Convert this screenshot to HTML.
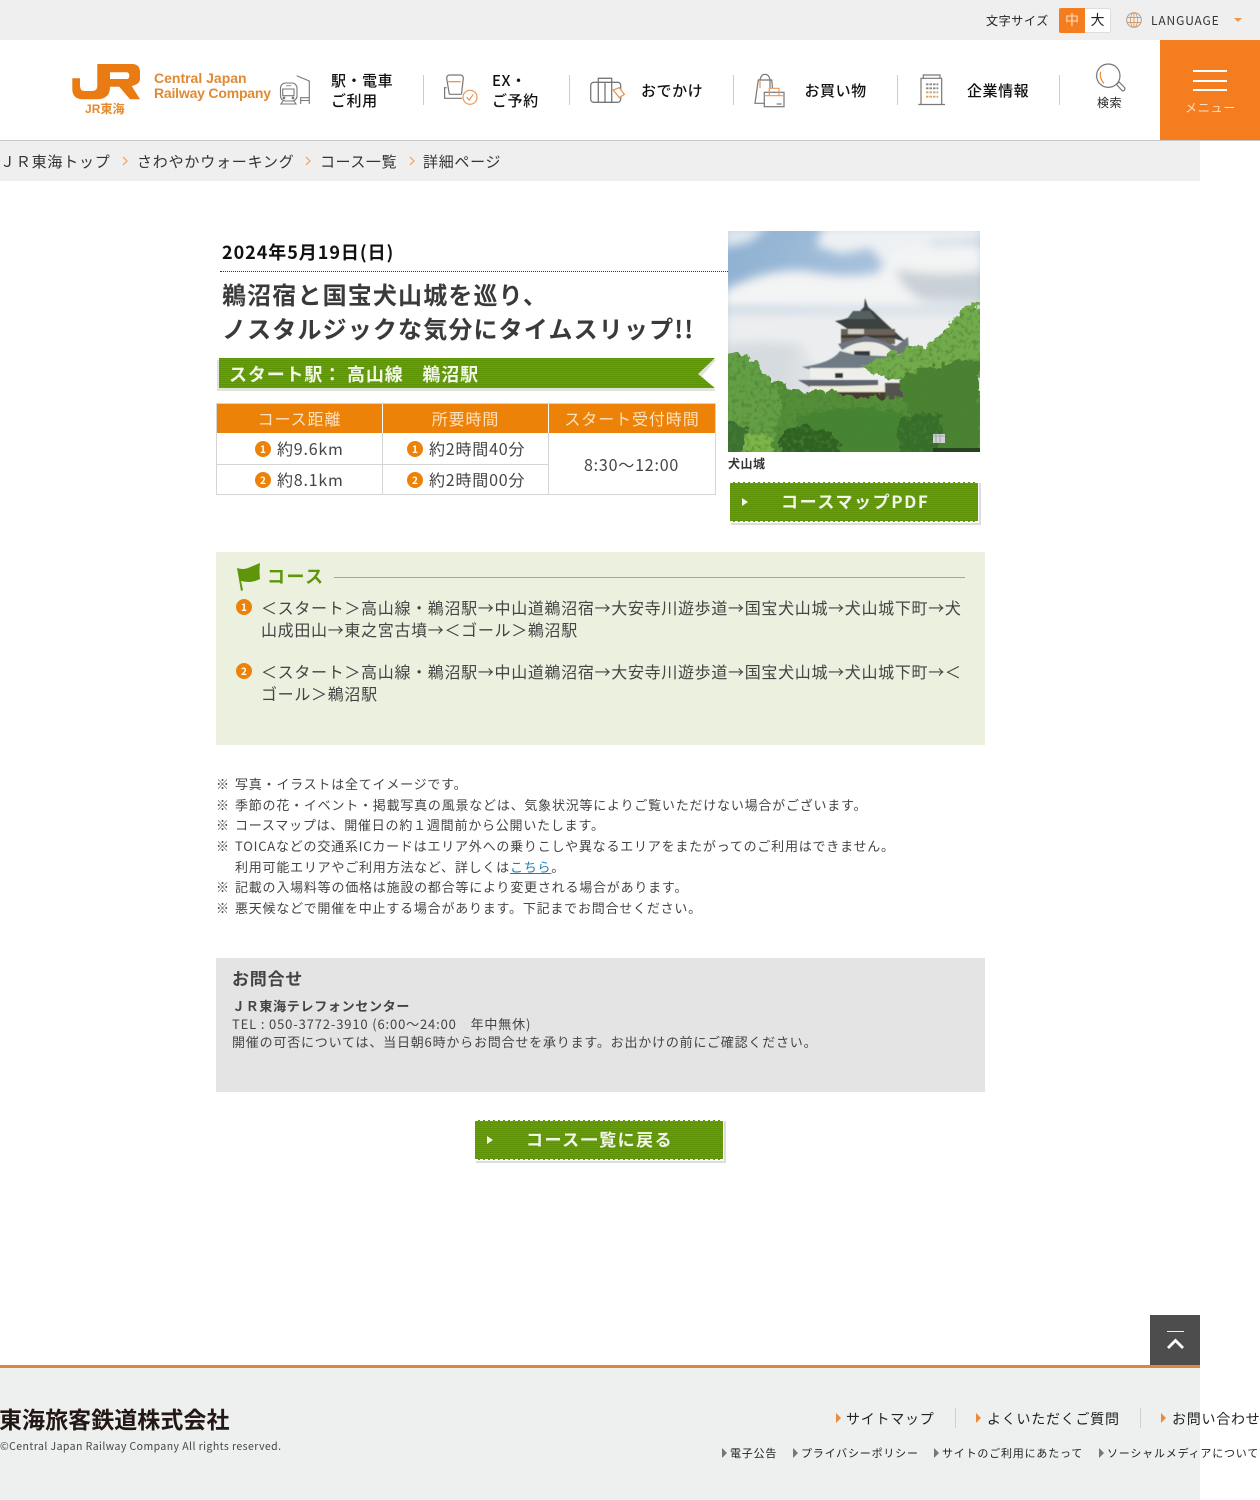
<!DOCTYPE html>
<html lang="ja"><head><meta charset="utf-8"><title>さわやかウォーキング</title>
<style>
*{box-sizing:border-box}
html,body{margin:0;padding:0}
body{width:1260px;height:1500px;position:relative;overflow:hidden;background:#fff;font-family:"Noto Sans CJK JP","Liberation Sans",sans-serif;color:#333}
.a{position:absolute;white-space:nowrap}
.t{position:absolute;white-space:nowrap;line-height:20px;height:20px}
svg{position:absolute;display:block;overflow:visible}
.nav{font-size:15px;font-weight:500;color:#111;letter-spacing:.55px;line-height:20px}
.sep{position:absolute;top:75px;width:1px;height:30px;background:#ccc}
.green{background:repeating-linear-gradient(180deg,#6a9e0c 0,#6a9e0c 1px,#5d9206 1px,#5d9206 2px)}
.num{position:absolute;border-radius:50%;width:16px;height:16px;background:#ec8208;color:#fff;font-size:10px;font-weight:700;line-height:16px;text-align:center}
.note{left:216px;font-size:13px;letter-spacing:.78px;color:#444}
.note b{font-weight:400;display:inline-block;width:19px;letter-spacing:0}
.th{position:absolute;top:404px;height:29px;background:#ec8208;font-size:16px;text-align:center;line-height:28px;letter-spacing:.9px;color:#fde2c0}
.td{position:absolute;font-size:16px;color:#444;letter-spacing:.8px;line-height:20px;white-space:nowrap}
.btn{position:absolute;border-top:1px dashed #fff;border-bottom:1px dashed #fff}
.fl{position:absolute;top:1409px;font-size:14px;letter-spacing:.75px;color:#222;line-height:20px;white-space:nowrap}
.fs{position:absolute;top:1445px;font-size:11px;letter-spacing:.8px;color:#222;line-height:16px;white-space:nowrap}
.tri{position:absolute;width:0;height:0;border-style:solid;border-color:transparent}
</style></head><body>

<!-- top bar -->
<div class="a" style="left:0;top:0;width:1260px;height:40px;background:#efefef"></div>
<div class="t" style="left:986px;top:11px;font-size:12px;letter-spacing:.65px;color:#222">文字サイズ</div>
<div class="a" style="left:1059px;top:8px;width:52px;height:25px;background:#fff;border:1px solid #ddd;border-radius:2px"></div>
<div class="a" style="left:1059px;top:8px;width:26px;height:25px;background:#f47d20;border-radius:2px 0 0 2px;color:#fde0c0;font-size:14px;line-height:25px;text-align:center">中</div>
<div class="a" style="left:1085px;top:8px;width:25px;height:25px;color:#222;font-size:14px;line-height:25px;text-align:center">大</div>
<svg style="left:1126px;top:12px" width="16" height="16" viewBox="0 0 16 16" fill="none" stroke="#d99a66" stroke-width=".9"><circle cx="8" cy="8" r="7.3" stroke="#999"/><ellipse cx="8" cy="8" rx="3.6" ry="7.3"/><path d="M8 .7v14.6M1 5.5h14M1 10.5h14"/></svg>
<div class="t" style="left:1151px;top:11px;font-size:12px;letter-spacing:.85px;color:#333">LANGUAGE</div>
<div class="tri" style="left:1234px;top:18px;border-width:4px 4px 0;border-top-color:#f0954a"></div>

<!-- header -->
<div class="a" style="left:0;top:40px;width:1260px;height:101px;background:#fff;border-bottom:1px solid #c8c8c8"></div>
<svg style="left:71px;top:64px" width="70" height="36" viewBox="0 0 70 36"><path fill="#ea7a12" fill-rule="evenodd" d="M26.300 0H60.700Q69 0 69 8V15Q69 20 60.700 22L69 35.300H59L48.300 22.700H39V23Q39 35.300 25.700 35.300H12.300Q1.300 35.300 1.300 25V14.300H9V22Q9 27 14 27H20.700Q26.300 27 26.300 22ZM39 8.300V15H55.700Q58.300 15 58.300 11.700T55.700 8.300Z"/></svg>
<div class="t" style="left:85px;top:99px;font-size:12px;font-weight:700;color:#e5892d;letter-spacing:.1px;font-family:'Liberation Sans','Noto Sans CJK JP',sans-serif">JR東海</div>
<div class="t" style="left:154px;top:68px;font-size:14px;font-weight:700;color:#e08a33;letter-spacing:0;font-family:'Liberation Sans',sans-serif">Central Japan</div>
<div class="t" style="left:154px;top:83px;font-size:14px;font-weight:700;color:#e08a33;letter-spacing:-.2px;font-family:'Liberation Sans',sans-serif">Railway Company</div>

<svg style="left:279px;top:75px" width="32" height="32" viewBox="0 0 32 32" fill="none" stroke="#777" stroke-width="1.100"><path d="M17.700 .7L30.300 6V29M21.700 29V22.700H30.300M21.700 25.500H30.300"/><rect x="1.500" y="8" width="16.500" height="18" rx="5"/><path d="M3.700 14H15V20.700H3.700z"/><path d="M7 10.700H12.300" stroke="#ee8a33"/><path d="M4 26L2 29H17L15 26"/><circle cx="5" cy="23" r=".8" fill="#777"/><circle cx="14" cy="23" r=".8" fill="#777"/></svg>
<div class="a nav" style="left:331px;top:71px;">駅・電車<br>ご利用</div>
<div class="sep" style="left:423px"></div>
<svg style="left:444px;top:74px" width="34" height="32" viewBox="0 0 34 32" fill="none" stroke="#777" stroke-width="1.200"><path d="M5.300 20.300L2.700 4.300Q2.700 1 6 1H16Q19.300 1 19.300 4.300L17.500 20.300M5.300 20.300H17.500M2.700 13.700H.6V24.300H18"/><path d="M4.300 7.700H16.700" stroke="#ee8a33"/><circle cx="26" cy="23.300" r="7" stroke="#e9975a"/><path d="M22.700 23.300L25.300 26L29.300 20.300" stroke="#e9975a"/></svg>
<div class="a nav" style="left:492px;top:71px;">EX・<br>ご予約</div>
<div class="sep" style="left:569px"></div>
<svg style="left:590px;top:76px" width="35" height="28" viewBox="0 0 35 28" fill="none" stroke="#777" stroke-width="1.300"><rect x=".7" y="6.300" width="30" height="20" rx="3"/><path d="M8.300 6.300V2.300H21.700V6.300M8.300 6.300V26.300M15 6.300V26.300M21.700 6.300V26.300"/><path d="M23.300 14L29.300 11.700L34.300 18.300L29.300 21.700z" stroke="#e9975a" fill="#fff"/></svg>
<div class="a nav" style="left:641px;top:81px">おでかけ</div>
<div class="sep" style="left:733px"></div>
<svg style="left:754px;top:74px" width="32" height="34" viewBox="0 0 32 34" fill="none" stroke="#777" stroke-width="1.200"><path d="M10.300 29.300H1L4.300 6H17.700L18.500 14"/><path d="M6 6Q7 .3 11 .3T16 6V14"/><path d="M6 6V14" stroke="#e9975a"/><rect x="10.300" y="18.300" width="19.700" height="14.400"/><path d="M15.300 21.700V14.300H25V21.700M10.300 21.700H30" stroke="#e9975a"/><path d="M22.700 30H27.700"/></svg>
<div class="a nav" style="left:804.500px;top:81px">お買い物</div>
<div class="sep" style="left:897px"></div>
<svg style="left:918px;top:74px" width="28" height="32" viewBox="0 0 28 32" fill="none" stroke="#777" stroke-width="1.200"><path d="M3 30.300V4.300H23.700V30.300M5.300 4.300V1H22V4.300M.3 30.500H27"/><path d="M8 10.300H20.300M8 14.300H20.300" stroke="#888" stroke-width="1.800" stroke-dasharray="2.500 1"/><path d="M8 18.300H20.300M8 22.700H20.300" stroke="#d5a466" stroke-width="1.800" stroke-dasharray="2.500 1"/></svg>
<div class="a nav" style="left:967px;top:81px">企業情報</div>
<div class="sep" style="left:1059px"></div>
<svg style="left:1096px;top:63px" width="30" height="30" viewBox="0 0 30 30" fill="none" stroke="#777" stroke-width="1.200"><circle cx="12.300" cy="12.700" r="11.700"/><path d="M4.700 8.700Q3 15 8 20.300" stroke="#ee8a33"/><path d="M20.500 21.500L23 19L28.500 24.500Q29.500 26.500 28 27.500T25.500 27z"/></svg>
<div class="t" style="left:1097px;top:93px;font-size:12px;letter-spacing:.5px;color:#222">検索</div>
<div class="a" style="left:1160px;top:40px;width:100px;height:100px;background:#f47d20"></div>
<div class="a" style="left:1193px;top:70px;width:34px;height:2px;background:#fff"></div>
<div class="a" style="left:1193px;top:80px;width:34px;height:2px;background:#fff"></div>
<div class="a" style="left:1193px;top:89px;width:34px;height:2px;background:#fff"></div>
<div class="t" style="left:1185px;top:98px;font-size:12px;color:#fde0c0;letter-spacing:.8px">メニュー</div>

<!-- breadcrumb -->
<div class="a" style="left:0;top:141px;width:1200px;height:40px;background:#efefef"></div>
<div class="t" style="left:0;top:152px;font-size:15px;letter-spacing:.8px;color:#333">ＪＲ東海トップ</div>
<div class="t" style="left:137px;top:152px;font-size:15px;letter-spacing:.8px;color:#333">さわやかウォーキング</div>
<div class="t" style="left:320px;top:152px;font-size:15px;letter-spacing:.55px;color:#333">コース一覧</div>
<div class="t" style="left:423px;top:152px;font-size:15px;letter-spacing:.7px;color:#333">詳細ページ</div>
<svg style="left:122px;top:156px" width="6" height="10" fill="none" stroke="#f0a060" stroke-width="1.200"><path d="M1 1l4 4-4 4"/></svg>
<svg style="left:305px;top:156px" width="6" height="10" fill="none" stroke="#f0a060" stroke-width="1.200"><path d="M1 1l4 4-4 4"/></svg>
<svg style="left:409px;top:156px" width="6" height="10" fill="none" stroke="#f0a060" stroke-width="1.200"><path d="M1 1l4 4-4 4"/></svg>

<!-- heading -->
<div class="a" style="left:222px;top:240px;font-size:18px;font-weight:700;letter-spacing:.95px;line-height:24px;color:#111">2024年5月19日(日)</div>
<div class="a" style="left:220px;top:271px;width:508px;border-top:1px dotted #333"></div>
<div class="a" style="left:222px;top:277px;font-size:24px;font-weight:700;letter-spacing:1.150px;line-height:34px;color:#3a3a3a">鵜沼宿と国宝犬山城を巡り、<br>ノスタルジックな気分にタイムスリップ!!</div>

<!-- ribbon -->
<svg style="left:217px;top:357px" width="500" height="34" viewBox="0 0 500 34"><defs><pattern id="st" width="4" height="2" patternUnits="userSpaceOnUse"><rect width="4" height="1" fill="#6da011"/><rect y="1" width="4" height="1" fill="#5c9304"/></pattern></defs><path d="M0 3h499l-14 16 14 15H0z" fill="#dfe3d8"/><path d="M2 1h496l-17 16 17 14H2z" fill="url(#st)"/></svg>
<div class="t" style="left:229px;top:364px;font-size:18px;font-weight:700;color:#f2f7e8;letter-spacing:.85px">スタート駅： 高山線　鵜沼駅</div>

<!-- table -->
<div class="a" style="left:216px;top:403px;width:500px;height:92px;border:1px solid #d5d5d5;background:#fff"></div>
<div class="th" style="left:217px;width:165px">コース距離</div>
<div class="th" style="left:383px;width:165px">所要時間</div>
<div class="th" style="left:549px;width:166px">スタート受付時間</div>
<div class="a" style="left:382px;top:433px;width:1px;height:61px;background:#d5d5d5"></div>
<div class="a" style="left:548px;top:433px;width:1px;height:61px;background:#d5d5d5"></div>
<div class="a" style="left:217px;top:464px;width:331px;height:1px;background:#d5d5d5"></div>
<div class="num" style="left:255px;top:441px;">1</div><div class="td" style="left:277px;top:438px">約9.6km</div>
<div class="num" style="left:255px;top:472px;">2</div><div class="td" style="left:277px;top:469px">約8.1km</div>
<div class="num" style="left:407px;top:441px;">1</div><div class="td" style="left:429px;top:438px">約2時間40分</div>
<div class="num" style="left:407px;top:472px;">2</div><div class="td" style="left:429px;top:469px">約2時間00分</div>
<div class="td" style="left:584px;top:454px">8:30～12:00</div>

<!-- photo -->
<svg style="left:728px;top:231px;overflow:hidden" width="252" height="221" viewBox="0 0 252 221">
<defs>
<linearGradient id="sky" x1="0" y1="0" x2="1" y2=".4"><stop offset="0" stop-color="#8eb0d2"/><stop offset=".6" stop-color="#a9c3dd"/><stop offset="1" stop-color="#a8bdd2"/></linearGradient>
<filter id="b1" x="-20%" y="-20%" width="140%" height="140%"><feGaussianBlur stdDeviation="5"/></filter>
<filter id="leaf" x="-10%" y="-10%" width="120%" height="120%">
<feTurbulence type="fractalNoise" baseFrequency=".12" numOctaves="3" seed="4" result="n"/>
<feDisplacementMap in="SourceGraphic" in2="n" scale="14" xChannelSelector="R" yChannelSelector="G" result="d"/>
<feTurbulence type="fractalNoise" baseFrequency=".22" numOctaves="2" seed="9"/>
<feColorMatrix values="0 0 0 0 .08  0 0 0 0 .2  0 0 0 0 .04  2.400 0 0 0 -1.150" result="sh"/>
<feComposite in="sh" in2="d" operator="in" result="shd"/>
<feMerge><feMergeNode in="d"/><feMergeNode in="shd"/></feMerge>
</filter>
<filter id="b3"><feGaussianBlur stdDeviation=".45"/></filter>
</defs>
<rect width="252" height="221" fill="url(#sky)"/>
<g filter="url(#b1)">
<path d="M-5 -5h45l-18 16-27 6z" fill="#dfe8ef"/>
<path d="M95 -5h160v14l-50 2-30 18-22 2-10-14-30 6-25-8z" fill="#eef1f3"/>
<path d="M170 20q40-10 85-6v10l-30 6z" fill="#f5f6f7"/>
<path d="M-5 60q45-24 85-20 35 8 70 2 8-18 30-24 40-8 75 4v55H-5z" fill="#f3f4f4"/>
<path d="M-5 80h260v90H-5z" fill="#ebedee"/>
<path d="M168 38q40 8 87 2v32l-60-2q-24-14-27-32z" fill="#c9d1d8"/>
<path d="M-5 115q40-8 80 0l-5 60H-5z" fill="#d6dbdf"/>
<path d="M65 115q30 20 40 60H60z" fill="#dde1e4"/>
</g>
<!-- castle -->
<g filter="url(#b3)">
<path d="M137 67l3 9 6 5h-15l5-5z" fill="#3c4444"/>
<path d="M107 90q16-2 24-10h14q10 10 33 31-16-5-28-7h-22q-12-9-21-14z" fill="#3a4240"/>
<path d="M125 80h17l6 8h-29z" fill="#566060"/>
<rect x="113" y="98" width="54" height="15" fill="#6a6258"/>
<rect x="113" y="104" width="54" height="3" fill="#3a3a36"/>
<rect x="120" y="98" width="16" height="5" fill="#d0ccc4"/>
<path d="M110 113q16-4 28-8 14 4 30 10l12-9 1 16-12 2H118z" fill="#6e7680"/>
<path d="M113 120q14-10 28-9 14 0 24 10l-6 3h-40z" fill="#eceae4"/>
<rect x="126" y="120" width="16" height="7" fill="#33373a"/>
<path d="M74 136q30-4 38-16l16 4 52 2-4 8-62 4H80z" fill="#6f7a84"/>
<rect x="82" y="137" width="70" height="11" fill="#eeefeb"/>
<rect x="107" y="142" width="8" height="5" fill="#333"/>
<path d="M70 149h80v5l-68 2z" fill="#5f656c"/>
<rect x="82" y="155" width="76" height="6" fill="#ecead8"/>
<rect x="104" y="161" width="54" height="14" fill="#4a3a30"/>
<rect x="157" y="152" width="19" height="20" fill="#55534e"/>
<rect x="108" y="172" width="45" height="6" fill="#8a7055"/>
</g>
<!-- trees -->
<g filter="url(#leaf)">
<path d="M-12 127q14-8 28-3 14 8 24 22 16 8 30 14 14 4 25-2 18 6 40 8l70 2 50-5v70H-12z" fill="#528f38"/>
<path d="M-12 127q14-8 28-3 14 8 24 22 14 10 14 30l-10 30-56 10z" fill="#649f44"/>
<path d="M132 136q22-8 38-16 16-10 28-3 8-12 24-22 6-16 22-21l14 2v70l-30 12-40-8-30-4z" fill="#72ab4c"/>
<path d="M170 150q30-20 82-22v100h-62q-6-40-20-78z" fill="#4a8331"/>
<path d="M70 185q40-12 90-6 30 2 40 50H60z" fill="#458531"/>
<path d="M55 200q20-8 50 2l10 25H50z" fill="#2d6224"/>
<path d="M10 210q15-10 32-5l5 25H10z" fill="#7db447"/>
<path d="M170 190q20-10 45-6l-5 45h-40z" fill="#356e29"/>
<path d="M-12 190q20-2 30 8l-5 28h-25z" fill="#3b7230"/>
</g>
<rect x="205" y="203" width="12" height="9" fill="#cfd3d6"/>
<path d="M205 205h12M208 203v9M212 203v9" stroke="#888" stroke-width=".6"/>
<path d="M205 217h47v4h-47z" fill="#26421f"/>
</svg>
<div class="t" style="left:728px;top:454px;font-size:12px;font-weight:700;color:#333;letter-spacing:.5px">犬山城</div>

<!-- pdf button -->
<div class="a" style="left:731px;top:483px;width:250px;height:42px;background:#ddd"></div>
<div class="a" style="left:729px;top:480px;width:250px;height:43px;background:#fff"></div>
<div class="btn green" style="left:730px;top:482px;width:248px;height:40px"></div>
<div class="tri" style="left:742px;top:498px;border-width:4px 0 4px 6px;border-left-color:#f2f7e8"></div>
<div class="t" style="left:781px;top:491px;font-size:17px;font-weight:700;color:#f2f7e8;letter-spacing:1.600px">コースマップPDF</div>

<!-- course -->
<div class="a" style="left:216px;top:552px;width:769px;height:193px;background:#ebf0df"></div>
<svg style="left:236px;top:562px" width="25" height="29" viewBox="0 0 25 29"><path d="M1 6q6 2 11 0t12-5q-1 8 0 16-6 3-11 3-4 0-8-1l2 9-2 1z" fill="#5f9508"/></svg>
<div class="t" style="left:267px;top:566px;font-size:18px;font-weight:700;color:#5f9508;letter-spacing:1.500px">コース</div>
<div class="a" style="left:334px;top:577px;width:631px;height:1px;background:#9ab66b"></div>
<div class="num" style="left:236px;top:599px">1</div>
<div class="a" style="left:261px;top:596px;width:710px;white-space:normal;font-size:16px;line-height:22px;color:#444;letter-spacing:.68px">＜スタート＞高山線・鵜沼駅→中山道鵜沼宿→大安寺川遊歩道→国宝犬山城→犬山城下町→犬<br>山成田山→東之宮古墳→＜ゴール＞鵜沼駅</div>
<div class="num" style="left:236px;top:663px">2</div>
<div class="a" style="left:261px;top:660px;width:710px;white-space:normal;font-size:16px;line-height:22px;color:#444;letter-spacing:.68px">＜スタート＞高山線・鵜沼駅→中山道鵜沼宿→大安寺川遊歩道→国宝犬山城→犬山城下町→＜<br>ゴール＞鵜沼駅</div>

<!-- notes -->
<div class="a note" style="top:774px;line-height:20.67px"><b>※</b>写真・イラストは全てイメージです。<br><b>※</b>季節の花・イベント・掲載写真の風景などは、気象状況等によりご覧いただけない場合がございます。<br><b>※</b>コースマップは、開催日の約１週間前から公開いたします。<br><b>※</b>TOICAなどの交通系ICカードはエリア外への乗りこしや異なるエリアをまたがってのご利用はできません。<br><b></b>利用可能エリアやご利用方法など、詳しくは<span style="color:#1a7fb5;text-decoration:underline">こちら</span>。<br><b>※</b>記載の入場料等の価格は施設の都合等により変更される場合があります。<br><b>※</b>悪天候などで開催を中止する場合があります。下記までお問合せください。</div>

<!-- contact -->
<div class="a" style="left:216px;top:958px;width:769px;height:134px;background:#e4e4e4"></div>
<div class="t" style="left:232px;top:968px;font-size:17px;font-weight:700;color:#444;letter-spacing:.8px">お問合せ</div>
<div class="t" style="left:232px;top:996px;font-size:13px;font-weight:700;color:#444;letter-spacing:.7px">ＪＲ東海テレフォンセンター</div>
<div class="t" style="left:232px;top:1014px;font-size:13px;color:#444;letter-spacing:.85px">TEL : 050-3772-3910 (6:00～24:00　年中無休)</div>
<div class="t" style="left:232px;top:1032px;font-size:13px;color:#444;letter-spacing:.8px">開催の可否については、当日朝6時からお問合せを承ります。お出かけの前にご確認ください。</div>

<!-- back -->
<div class="a" style="left:476px;top:1121px;width:250px;height:42px;background:#ddd"></div>
<div class="a" style="left:474px;top:1118px;width:250px;height:43px;background:#fff"></div>
<div class="btn green" style="left:475px;top:1120px;width:248px;height:40px"></div>
<div class="tri" style="left:487px;top:1136px;border-width:4px 0 4px 6px;border-left-color:#f2f7e8"></div>
<div class="t" style="left:526px;top:1129px;font-size:17px;font-weight:700;color:#f2f7e8;letter-spacing:1.500px">コース一覧に戻る</div>

<!-- footer -->
<div class="a" style="left:0;top:1365px;width:1200px;height:135px;background:#eeefef;border-top:3px solid #dd8640"></div>
<div class="a" style="left:1150px;top:1315px;width:50px;height:50px;background:#4d4d4d"></div>
<div class="a" style="left:1167px;top:1331px;width:17px;height:1px;background:#eee"></div>
<svg style="left:1167px;top:1337px" width="17" height="13" fill="none" stroke="#fff" stroke-width="2.800"><path d="M1 11l7.500-7.500 7.500 7.500"/></svg>
<div class="t" style="left:-1px;top:1406px;height:24px;line-height:24px;font-size:23px;font-weight:700;color:#231815;letter-spacing:.05px">東海旅客鉄道株式会社</div>
<div class="t" style="left:0;top:1437px;font-size:10.500px;letter-spacing:.43px;color:#444">©Central Japan Railway Company All rights reserved.</div>

<div class="tri" style="left:836px;top:1413px;border-width:5px 0 5px 5px;border-left-color:#ea8a3a"></div>
<div class="fl" style="left:846px">サイトマップ</div>
<div class="a" style="left:955px;top:1408px;width:1px;height:20px;background:#d0d0d0"></div>
<div class="tri" style="left:976px;top:1413px;border-width:5px 0 5px 5px;border-left-color:#ea8a3a"></div>
<div class="fl" style="left:987px">よくいただくご質問</div>
<div class="a" style="left:1140px;top:1408px;width:1px;height:20px;background:#d0d0d0"></div>
<div class="tri" style="left:1161px;top:1413px;border-width:5px 0 5px 5px;border-left-color:#ea8a3a"></div>
<div class="fl" style="left:1172px">お問い合わせ</div>

<div class="tri" style="left:722px;top:1448px;border-width:5px 0 5px 5px;border-left-color:#777"></div>
<div class="fs" style="left:730px">電子公告</div>
<div class="tri" style="left:793px;top:1448px;border-width:5px 0 5px 5px;border-left-color:#777"></div>
<div class="fs" style="left:801px">プライバシーポリシー</div>
<div class="tri" style="left:934px;top:1448px;border-width:5px 0 5px 5px;border-left-color:#777"></div>
<div class="fs" style="left:942px">サイトのご利用にあたって</div>
<div class="tri" style="left:1099px;top:1448px;border-width:5px 0 5px 5px;border-left-color:#777"></div>
<div class="fs" style="left:1107px">ソーシャルメディアについて</div>
</body></html>
